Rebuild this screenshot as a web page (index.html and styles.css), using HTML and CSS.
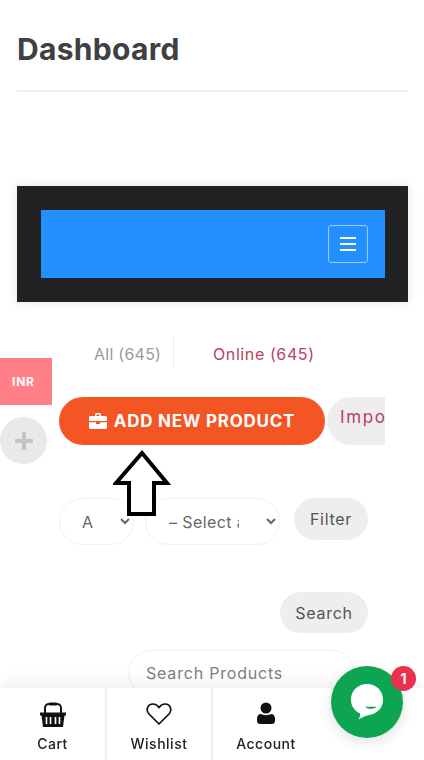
FILE: index.html
```html
<!DOCTYPE html>
<html lang="en">
<head>
    <meta charset="UTF-8">
    <title>Dashboard</title>
    <link rel="stylesheet" href="styles.css">
</head>
<body>
<div class="page">
    <h1 class="title">Dashboard</h1>
    <div class="banner">
        <div class="navbar">
            <span class="toggler"><i></i><i></i><i></i></span>
        </div>
    </div>
    <div class="tabs">
        <a class="tab tab-all">All (645)</a>
        <a class="tab tab-online">Online (645)</a>
    </div>
    <div class="actions">
        <a class="btn-add">
            <svg class="case" viewBox="0 0 18 16"><path d="M6 3V1.500C6 .7 6.700 0 7.500 0h3C11.300 0 12 .7 12 1.500V3h4.500C17.300 3 18 3.700 18 4.500V8H0V4.500C0 3.700.7 3 1.500 3H6zm1.500 0h3V1.500h-3V3zM0 9.200h7V11h4V9.200h7v5.300c0 .8-.7 1.500-1.500 1.500h-15C.7 16 0 15.300 0 14.500V9.200z" fill="#fff"/></svg>
            ADD NEW PRODUCT
        </a>
        <a class="btn-import">Import</a>
    </div>
    <svg class="arrow" width="58" height="68" viewBox="0 0 58 68"><path d="M29 3 L54 33 H41 V64 H16 V33 H3 Z" fill="#fff" stroke="#000" stroke-width="4"/></svg>
    <div class="filters">
        <select class="pick pick-a"><option>A</option></select>
        <select class="pick pick-b"><option>– Select a category</option></select>
        <a class="btn-grey btn-filter">Filter</a>
    </div>
    <div class="search-row">
        <a class="btn-grey btn-search">Search</a>
    </div>
    <input class="search-input" type="text" placeholder="Search Products">
</div>

<div class="side-currency">INR</div>
<div class="side-plus">
    <svg width="18" height="18" viewBox="0 0 18 18"><path d="M7 0h4v7h7v4h-7v7H7v-7H0V7h7z" fill="#c4c4c4"/></svg>
</div>

<div class="bottom-nav">
    <a class="nav-item">
        <svg class="nav-icon" width="28" height="26" viewBox="0 0 28 26"><path d="M6 11 V6 C6 3.500 8 2 10 2 H18 C20 2 22 3.500 22 6 V11" fill="none" stroke="#111" stroke-width="2"/><rect x="10" y="0.500" width="8" height="3" rx="1" fill="#111"/><path d="M1 10.500 H27 V13.500 H25.500 L24 25 H4 L2.500 13.500 H1 Z" fill="#111"/><path d="M7.500 15 V22 M11.500 15 V22 M16.500 15 V22 M20.500 15 V22" stroke="#fff" stroke-width="1.600"/></svg>
        <span>Cart</span>
    </a>
    <a class="nav-item">
        <svg class="nav-icon" width="26" height="24" viewBox="0 0 26 24"><path d="M13 22 L3 12 C-0.500 8 1.500 2 7 2 C10 2 12 4 13 5.500 C14 4 16 2 19 2 C24.500 2 26.500 8 23 12 Z" fill="none" stroke="#111" stroke-width="1.700" stroke-linejoin="round"/></svg>
        <span>Wishlist</span>
    </a>
    <a class="nav-item">
        <svg class="nav-icon" width="18" height="22" viewBox="0 0 18 22"><circle cx="9" cy="6" r="5.500" fill="#111"/><path d="M4 12 C6 13.500 12 13.500 14 12 C16.500 12 18 14 18 16.500 V19 C18 21 16.500 22 15 22 H3 C1.500 22 0 21 0 19 V16.500 C0 14 1.500 12 4 12 Z" fill="#111"/></svg>
        <span>Account</span>
    </a>
</div>

<div class="chat">
    <svg width="34" height="38" viewBox="0 0 36 40"><path d="M18 1 C28 1 35 8.500 35 17.500 C35 27 27.500 33 19 34 C15 35 12 37 9 38.500 C10.500 36 11 34 10.500 32 C5 29.500 1 24 1 17.500 C1 8.500 8 1 18 1 Z" fill="#fff"/><path d="M16 25 H28 C26 28 18 28 16 25 Z" fill="#0da551"/></svg>
    <span class="badge">1</span>
</div>
</body>
</html>
```

FILE: styles.css
```css
*{
    margin: 0;
    padding: 0;
    box-sizing: border-box;
}
html, body{
    height: 760px;
    overflow: hidden;
}
body{
    font-family: "Inter", "Liberation Sans", sans-serif;
    background: #fff;
    color: #444;
}
a{
    text-decoration: none;
    cursor: pointer;
}
.page{
    padding: 0 16px 0 17px;
    height: 760px;
    overflow: hidden;
}
.title{
    font-size: 30px;
    line-height: 34px;
    font-weight: 700;
    letter-spacing: .3px;
    color: #404040;
    padding: 32px 0 24px;
    border-bottom: 2px solid #f0f0f0;
}
.banner{
    margin-top: 94px;
    height: 116px;
    background: #222;
    padding: 24px 23px 24px 24px;
    box-shadow: 0 0 10px rgba(0,0,0,.12);
}
.navbar{
    width: 344px;
    height: 68px;
    background: #2490ff;
    display: flex;
    align-items: center;
    justify-content: flex-end;
    padding-right: 17px;
}
.toggler{
    width: 40px;
    height: 38px;
    border: 1px solid rgba(255,255,255,.55);
    border-radius: 3px;
    display: flex;
    flex-direction: column;
    align-items: center;
    justify-content: center;
    gap: 4px;
}
.toggler i{
    display: block;
    width: 16px;
    height: 2px;
    background: #fff;
}
.tabs{
    margin-top: 35px;
    height: 31px;
    display: flex;
    align-items: center;
    padding-left: 77px;
    font-size: 16px;
}
.tab-all{
    color: #9a9a9a;
    height: 31px;
    line-height: 35px;
    border-right: 1px solid #eee;
    width: 80px;
    white-space: nowrap;
    letter-spacing: .25px;
}
.tab-online{
    color: #b8405e;
    margin-left: 39px;
    height: 31px;
    line-height: 35px;
    white-space: nowrap;
    letter-spacing: .6px;
}
.actions{
    margin-top: 29px;
    margin-left: 42px;
    width: 326px;
    height: 48px;
    display: flex;
    gap: 2px;
    overflow: hidden;
}
.btn-add{
    flex: none;
    width: 266px;
    height: 48px;
    border-radius: 24px;
    background: #f35525;
    color: #fff;
    font-size: 17px;
    font-weight: 700;
    letter-spacing: .75px;
    display: flex;
    align-items: center;
    justify-content: center;
    gap: 7px;
    white-space: nowrap;
}
.case{
    width: 18px;
    height: 16px;
}
.btn-import{
    flex: none;
    width: 90px;
    height: 48px;
    border-radius: 24px;
    background: #eee;
    color: #b8405e;
    font-size: 17px;
    line-height: 40px;
    padding-left: 13px;
    letter-spacing: 1.6px;
}
.arrow{
    display: block;
    position: relative;
    z-index: 1;
    margin: 5px 0 0 96px;
}
.filters{
    margin-top: -20px;
    margin-left: 42px;
    display: flex;
    align-items: flex-start;
}
.pick{
    height: 47px;
    border: 1px solid #f0f0f0;
    border-radius: 24px;
    background: #fff;
    color: #666;
    font-family: inherit;
    font-size: 16px;
    letter-spacing: .4px;
}
.pick-a{
    width: 75px;
    margin-right: 11px;
    padding-left: 18px;
}
.pick-b{
    width: 135px;
    margin-right: 14px;
    padding: 0 24px 0 19px;
}
.btn-grey{
    display: block;
    background: #eee;
    color: #555;
    font-size: 16px;
    letter-spacing: .7px;
    text-align: center;
    border-radius: 21px;
}
.btn-filter{
    width: 74px;
    height: 42px;
    line-height: 42px;
}
.search-row{
    margin-top: 47px;
    display: flex;
    justify-content: flex-end;
    padding-right: 40px;
}
.btn-search{
    width: 88px;
    height: 41px;
    line-height: 42px;
}
.search-input{
    display: block;
    margin: 17px 0 0 111px;
    width: 227px;
    height: 46px;
    border: 1px solid #f0f0f0;
    border-radius: 23px;
    padding-left: 17px;
    font-family: inherit;
    font-size: 16px;
    letter-spacing: .8px;
}
.search-input::placeholder{
    color: #808080;
}
.side-currency{
    position: fixed;
    left: 0;
    top: 358px;
    width: 52px;
    height: 47px;
    background: #ff8087;
    color: #fff;
    font-size: 12px;
    font-weight: 700;
    letter-spacing: .8px;
    line-height: 47px;
    padding-left: 12px;
}
.side-plus{
    position: fixed;
    left: 0;
    top: 417px;
    width: 47px;
    height: 47px;
    border-radius: 50%;
    background: #e9e9e9;
    display: flex;
    align-items: center;
    justify-content: center;
}
.bottom-nav{
    position: fixed;
    left: 0;
    right: 0;
    bottom: 0;
    height: 72px;
    background: #fff;
    display: flex;
    box-shadow: 0 -6px 16px rgba(0,0,0,.06);
}
.nav-item{
    width: 106px;
    flex: none;
    border-right: 2px solid #eee;
    display: flex;
    flex-direction: column;
    align-items: center;
    color: #222;
    font-size: 14px;
    font-weight: 500;
    letter-spacing: .5px;
    padding: 14px 0 8px;
}
.nav-item:first-child{
    width: 107px;
}
.nav-item span{
    margin-top: auto;
}
.nav-item:nth-child(3){
    border-right: 0;
}
.nav-icon{
    display: block;
}
.chat{
    position: fixed;
    left: 331px;
    top: 666px;
    width: 72px;
    height: 72px;
    border-radius: 50%;
    background: #0da551;
    display: flex;
    align-items: center;
    justify-content: center;
    box-shadow: 0 4px 14px rgba(0,0,0,.12);
}
.badge{
    position: absolute;
    right: -13px;
    top: 0;
    width: 25px;
    height: 25px;
    border-radius: 50%;
    background: #e8304f;
    color: #fff;
    font-size: 14px;
    font-weight: 700;
    line-height: 25px;
    text-align: center;
}
```
